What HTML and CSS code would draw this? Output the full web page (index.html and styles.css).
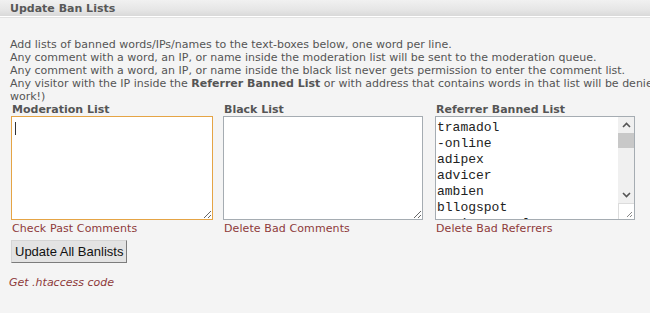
FILE: index.html
```html
<!DOCTYPE html>
<html lang="en">
<head>
    <meta charset="UTF-8">
    <title>Update Ban Lists</title>
    <link rel="stylesheet" href="styles.css">
</head>
<body>
    <!-- Panel header -->
    <div class="panel-head">Update Ban Lists</div>

    <div class="panel-body">
        <p class="intro">
            Add lists of banned words/IPs/names to the text-boxes below, one word per line.<br>
            Any comment with a word, an IP, or name inside the moderation list will be sent to the moderation queue.<br>
            Any comment with a word, an IP, or name inside the black list never gets permission to enter the comment list.<br>
            Any visitor with the IP inside the <strong>Referrer Banned List</strong> or with address that contains words in that list will be denied (htaccess has to<br>
            work!)
        </p>

        <!-- Lists -->
        <div class="lists">
            <div class="list-col">
                <label class="list-label">Moderation List</label>
                <div class="caret-wrap">
                    <textarea class="list-box focused"></textarea>
                    <span class="caret"></span>
                </div>
                <a href="#" class="list-link">Check Past Comments</a>
            </div>
            <div class="list-col">
                <label class="list-label">Black List</label>
                <textarea class="list-box"></textarea>
                <a href="#" class="list-link">Delete Bad Comments</a>
            </div>
            <div class="list-col">
                <label class="list-label">Referrer Banned List</label>
                <div class="scroll-box">
                    <textarea class="list-area">tramadol
-online
adipex
advicer
ambien
bllogspot
casino-royale
cialis</textarea>
                    <div class="scrollbar">
                        <div class="sb-btn">
                            <svg width="9" height="6" viewBox="0 0 9 6"><path d="M1 5 L4.5 1.5 L8 5" fill="none" stroke="#555" stroke-width="1.6"/></svg>
                        </div>
                        <div class="sb-thumb"></div>
                        <div class="sb-track"></div>
                        <div class="sb-btn">
                            <svg width="9" height="6" viewBox="0 0 9 6"><path d="M1 1 L4.5 4.5 L8 1" fill="none" stroke="#555" stroke-width="1.6"/></svg>
                        </div>
                        <div class="sb-grip">
                            <svg width="8" height="8" viewBox="0 0 8 8"><path d="M7 2 L2 7 M7 5 L5 7" stroke="#888" stroke-width="1"/></svg>
                        </div>
                    </div>
                </div>
                <a href="#" class="list-link">Delete Bad Referrers</a>
            </div>
        </div>

        <button class="update-btn">Update All Banlists</button>

        <p class="htaccess"><a href="#">Get .htaccess code</a></p>
    </div>
</body>
</html>
```

FILE: styles.css
```css
/* Base */
* {
    box-sizing: border-box;
}

body {
    margin: 0;
    background: #f4f4f4;
    color: #555555;
    font-family: "DejaVu Sans", Verdana, sans-serif;
    font-size: 11px;
    overflow: hidden;
}

/* Header */
.panel-head {
    height: 17px;
    padding: 1px 10px 0;
    background: linear-gradient(#f1f1f1, #e6e6e6 60%, #d9d9d9);
    border-bottom: 1px solid #ffffff;
    box-shadow: 0 1px 0 #e2e2e2;
    font-size: 11px;
    font-weight: bold;
    line-height: 15px;
    color: #585858;
}

.panel-body {
    padding: 0 10px;
}

.intro {
    margin: 21px 0 0;
    line-height: 13px;
    white-space: nowrap;
}

/* Lists */
.lists {
    display: grid;
    grid-template-columns: 212px 212px 212px;
    margin-left: 1px;
}

.list-col {
    display: flex;
    flex-direction: column;
    align-items: flex-start;
}

.list-label {
    padding-left: 1px;
    font-weight: bold;
    line-height: 13px;
    color: #555555;
}

.caret-wrap {
    position: relative;
    display: flex;
}

.caret {
    position: absolute;
    left: 4px;
    top: 6px;
    width: 1px;
    height: 13px;
    background: #333333;
}

.list-box {
    width: 200px;
    height: 104px;
    margin: 0;
    border: 1px solid #a5acb2;
    background: #ffffff;
    font-family: "Liberation Mono", monospace;
    font-size: 13px;
}

.list-box.focused {
    width: 202px;
    border-color: #e5a445;
    outline: none;
}

.scroll-box {
    display: flex;
    width: 200px;
    height: 104px;
    border: 1px solid #a5acb2;
    background: #ffffff;
}

.list-area {
    flex: 1;
    margin: 0;
    padding: 3px 1px;
    border: none;
    resize: none;
    overflow: hidden;
    outline: none;
    white-space: pre;
    font-family: "Liberation Mono", monospace;
    font-size: 13px;
    line-height: 16px;
    color: #222222;
}

/* Fake classic scrollbar */
.scrollbar {
    width: 16px;
    display: flex;
    flex-direction: column;
    background: #f0f0f0;
}

.sb-btn {
    height: 16px;
    display: flex;
    align-items: center;
    justify-content: center;
}

.sb-thumb {
    height: 15px;
    background: #c8c8c8;
}

.sb-track {
    flex: 1;
}

.sb-grip {
    height: 16px;
    display: flex;
    align-items: flex-end;
    justify-content: flex-end;
    padding: 0 1px 1px 0;
    background: #ffffff;
    border-top: 1px solid #dcdcdc;
    border-left: 1px solid #dcdcdc;
}

.list-link {
    margin-top: 2px;
    padding-left: 1px;
    font-size: 11px;
    line-height: 14px;
    letter-spacing: 0.1px;
    color: #8e3a3a;
    text-decoration: none;
}

/* Button */
.update-btn {
    margin: 4px 0 0 1px;
    height: 23px;
    padding: 0 3px;
    background: #e3e3e3;
    border: 1px solid;
    border-color: #d4d4d4 #7c7c7c #7c7c7c #d4d4d4;
    font-family: "Liberation Sans", Arial, sans-serif;
    font-size: 13px;
    color: #111111;
}

.htaccess {
    margin: 13px 0 0 -1px;
    font-style: italic;
    line-height: 13px;
}

.htaccess a {
    color: #8e3a3a;
    text-decoration: none;
}
```
